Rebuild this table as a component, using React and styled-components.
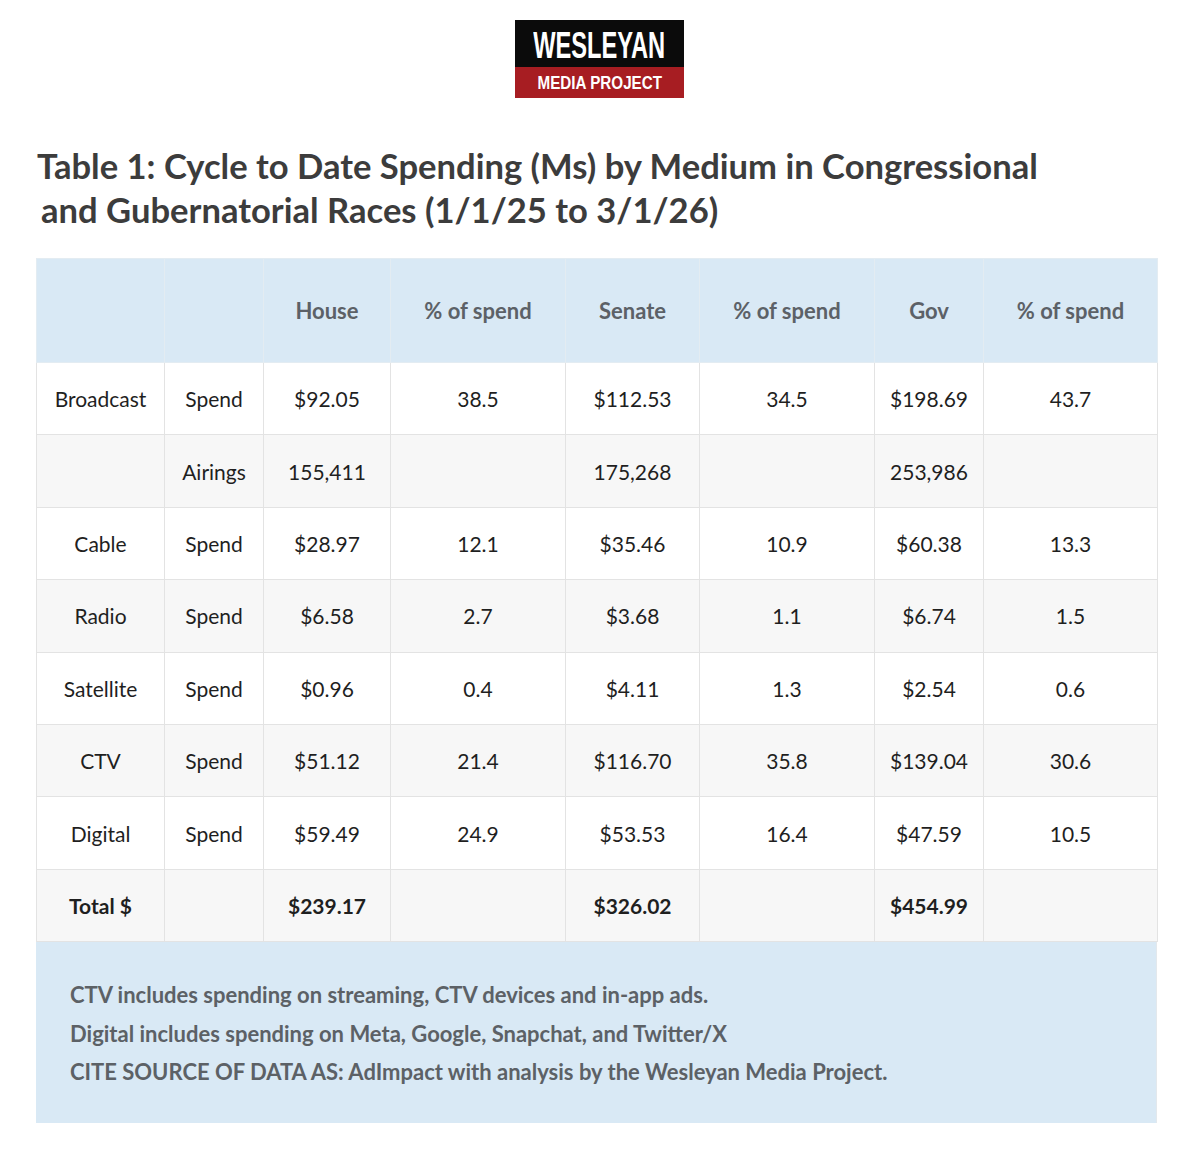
import React from "react";
import styled, { createGlobalStyle } from "styled-components";

const Global = createGlobalStyle`
  html, body { margin: 0; padding: 0; background: #fff; }
  body { font-family: "Lato", "Open Sans", sans-serif; }
`;

const Page = styled.div`
  width: 1200px;
  height: 1161px;
  box-sizing: border-box;
  padding: 20px 43px 0 36px;
  display: flex;
  flex-direction: column;
`;

const LogoWrap = styled.div`
  display: flex;
  justify-content: center;
  padding-left: 6px;
`;

const Logo = styled.div`
  width: 169px;
  display: flex;
  flex-direction: column;
`;

const LogoBand = styled.div`
  background: ${(p) => p.$bg};
  color: #fff;
  height: ${(p) => p.$h}px;
  display: flex;
  align-items: center;
  justify-content: center;
  overflow: hidden;
  font-family: "Liberation Sans", "Arial", sans-serif;
  font-weight: 700;
`;

const LogoText = styled.span`
  display: inline-block;
  white-space: nowrap;
  font-size: ${(p) => p.$size}px;
  line-height: 1;
  transform: scaleX(${(p) => p.$sx});
  padding-top: ${(p) => p.$pt || 0}px;
`;

const Title = styled.h1`
  margin: 46px 0 0 1px;
  font-family: "Lato", sans-serif;
  font-weight: 700;
  font-size: 34.6px;
  line-height: 44px;
  color: #3c3c3c;
`;

const Indent = styled.span`
  padding-left: 4px;
`;

const Table = styled.table`
  margin-top: 26px;
  width: 1121px;
  border-collapse: collapse;
  table-layout: fixed;
  font-family: "Lato", sans-serif;
  border: 1px solid #e2e2e2;
`;

const HeadCell = styled.th`
  background: #d9e9f5;
  color: #5c6167;
  font-weight: 700;
  font-size: 22px;
  height: 103px;
  padding: 0;
  text-align: center;
  border: 1px solid #e3ecf2;
`;

const Row = styled.tr`
  background: ${(p) => (p.$shade ? "#f7f7f7" : "#ffffff")};
`;

const Cell = styled.td`
  height: 71.4px;
  padding: 0;
  text-align: center;
  font-size: 21px;
  color: #1f1f1f;
  font-weight: ${(p) => (p.$bold ? 700 : 400)};
  border: 1px solid #e3e3e3;
`;

const Footer = styled.div`
  width: 1121px;
  box-sizing: border-box;
  background: #d9e9f5;
  height: 181px;
  padding: 34px 0 0 34px;
  font-family: "Lato", sans-serif;
  font-weight: 700;
  font-size: 22px;
  line-height: 38.5px;
  color: #5c6166;
  border-right: 1px solid #e3e8ec;
`;

const cols = [128, 99, 127, 175, 134, 175, 109, 174];
const headers = ["", "", "House", "% of spend", "Senate", "% of spend", "Gov", "% of spend"];

const rows = [
  ["Broadcast", "Spend", "$92.05", "38.5", "$112.53", "34.5", "$198.69", "43.7"],
  ["", "Airings", "155,411", "", "175,268", "", "253,986", ""],
  ["Cable", "Spend", "$28.97", "12.1", "$35.46", "10.9", "$60.38", "13.3"],
  ["Radio", "Spend", "$6.58", "2.7", "$3.68", "1.1", "$6.74", "1.5"],
  ["Satellite", "Spend", "$0.96", "0.4", "$4.11", "1.3", "$2.54", "0.6"],
  ["CTV", "Spend", "$51.12", "21.4", "$116.70", "35.8", "$139.04", "30.6"],
  ["Digital", "Spend", "$59.49", "24.9", "$53.53", "16.4", "$47.59", "10.5"],
];
const total = ["Total $", "", "$239.17", "", "$326.02", "", "$454.99", ""];

export default function App() {
  return (
    <>
      <Global />
      <Page>
        <LogoWrap>
          <Logo>
            <LogoBand $bg="#0b0b0b" $h={47}>
              <LogoText $size={37} $sx={0.64} $pt={3}>WESLEYAN</LogoText>
            </LogoBand>
            <LogoBand $bg="#a71d22" $h={31}>
              <LogoText $size={19} $sx={0.8}>MEDIA PROJECT</LogoText>
            </LogoBand>
          </Logo>
        </LogoWrap>
        <Title>
          Table 1: Cycle to Date Spending (Ms) by Medium in Congressional
          <br />
          <Indent>and Gubernatorial Races (1/1/25 to 3/1/26)</Indent>
        </Title>
        <Table>
          <colgroup>
            {cols.map((w, i) => (
              <col key={i} style={{ width: w }} />
            ))}
          </colgroup>
          <thead>
            <tr>
              {headers.map((h, i) => (
                <HeadCell key={i}>{h}</HeadCell>
              ))}
            </tr>
          </thead>
          <tbody>
            {rows.map((r, i) => (
              <Row key={i} $shade={i % 2 === 1}>
                {r.map((c, j) => (
                  <Cell key={j}>{c}</Cell>
                ))}
              </Row>
            ))}
            <Row $shade>
              {total.map((c, j) => (
                <Cell key={j} $bold>
                  {c}
                </Cell>
              ))}
            </Row>
          </tbody>
        </Table>
        <Footer>
          <div>CTV includes spending on streaming, CTV devices and in-app ads.</div>
          <div>Digital includes spending on Meta, Google, Snapchat, and Twitter/X</div>
          <div>CITE SOURCE OF DATA AS: AdImpact with analysis by the Wesleyan Media Project.</div>
        </Footer>
      </Page>
    </>
  );
}
